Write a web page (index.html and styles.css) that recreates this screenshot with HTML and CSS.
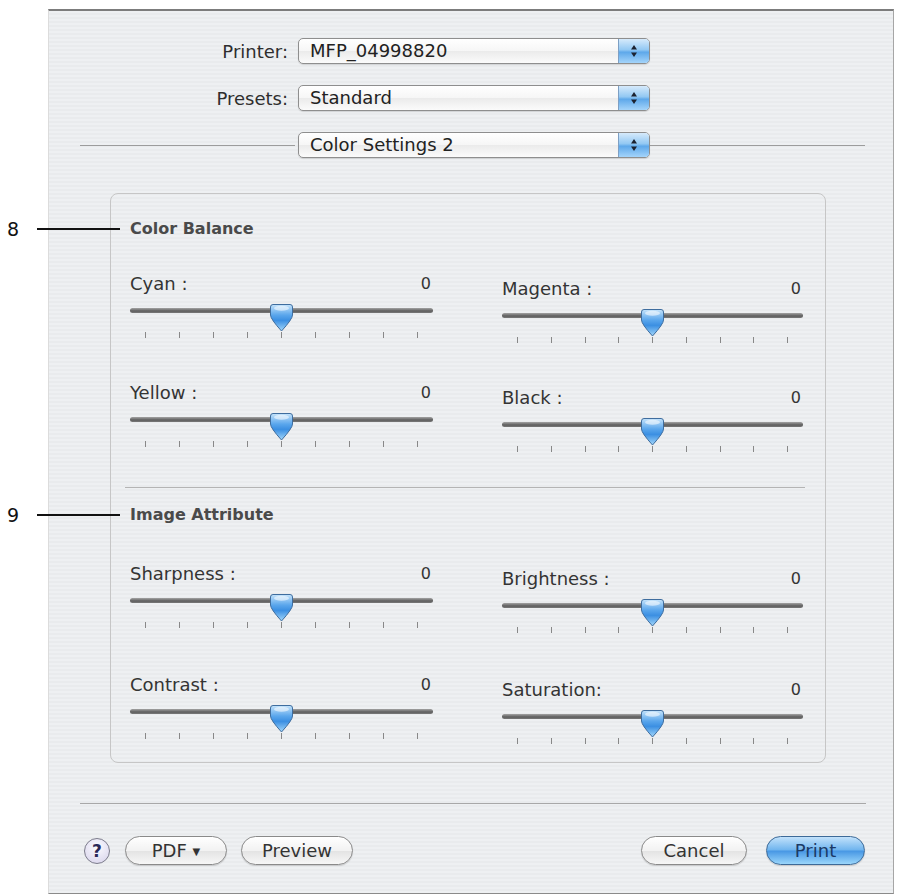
FILE: index.html
```html
<!DOCTYPE html>
<html lang="en">

<head>
    <meta charset="UTF-8">
    <meta name="viewport" content="width=device-width, initial-scale=1.0">
    <title>Print</title>
    <link rel="stylesheet" href="styles.css">
</head>

<body>
    <!-- shared shapes for the slider thumbs -->
    <svg class="defs" width="0" height="0">
        <defs>
            <linearGradient id="thumbFill" x1="0" y1="0" x2="0" y2="1">
                <stop offset="0" stop-color="#c6e4fb" />
                <stop offset="0.4" stop-color="#5aa6ec" />
                <stop offset="0.6" stop-color="#3b8fe2" />
                <stop offset="1" stop-color="#a4d8fb" />
            </linearGradient>
            <symbol id="thumb" viewBox="0 0 23 28">
                <path d="M3 0.5 H20 Q22.5 0.5 22.5 3 V11 Q22.5 15 11.5 27 Q0.5 15 0.5 11 V3 Q0.5 0.5 3 0.5 Z"
                    fill="url(#thumbFill)" stroke="#3f6d9e" stroke-width="1" />
                <ellipse cx="11.5" cy="4.2" rx="7.5" ry="2.5" fill="#fff" opacity="0.55" />
            </symbol>
        </defs>
    </svg>

    <div class="dialog">
        <div class="field">
            <span class="field-label">Printer:</span>
            <div class="popup">
                <span class="popup-text">MFP_04998820</span>
                <span class="popup-arrows">
                    <svg width="10" height="16" viewBox="0 0 10 16"><path d="M2 6.5 L5 2 L8 6.5 Z M2 9.5 L5 14 L8 9.5 Z" fill="#1c2230" /></svg>
                </span>
            </div>
        </div>
        <div class="field">
            <span class="field-label">Presets:</span>
            <div class="popup">
                <span class="popup-text">Standard</span>
                <span class="popup-arrows">
                    <svg width="10" height="16" viewBox="0 0 10 16"><path d="M2 6.5 L5 2 L8 6.5 Z M2 9.5 L5 14 L8 9.5 Z" fill="#1c2230" /></svg>
                </span>
            </div>
        </div>
        <div class="panel-select">
            <span class="rule rule-left"></span>
            <div class="popup">
                <span class="popup-text">Color Settings 2</span>
                <span class="popup-arrows">
                    <svg width="10" height="16" viewBox="0 0 10 16"><path d="M2 6.5 L5 2 L8 6.5 Z M2 9.5 L5 14 L8 9.5 Z" fill="#1c2230" /></svg>
                </span>
            </div>
            <span class="rule"></span>
        </div>

        <div class="group">
            <h3 class="section-title"><span class="callout">8<span class="callout-line"></span></span>Color Balance</h3>
            <div class="sliders">
                <div class="slider">
                    <div class="slider-head"><span>Cyan :</span><span class="slider-value">0</span></div>
                    <div class="track"><svg class="thumb" width="23" height="28"><use href="#thumb" /></svg></div>
                    <div class="ticks"><i></i><i></i><i></i><i></i><i></i><i></i><i></i><i></i><i></i></div>
                </div>
                <div class="slider shift">
                    <div class="slider-head"><span>Magenta :</span><span class="slider-value">0</span></div>
                    <div class="track"><svg class="thumb" width="23" height="28"><use href="#thumb" /></svg></div>
                    <div class="ticks"><i></i><i></i><i></i><i></i><i></i><i></i><i></i><i></i><i></i></div>
                </div>
                <div class="slider">
                    <div class="slider-head"><span>Yellow :</span><span class="slider-value">0</span></div>
                    <div class="track"><svg class="thumb" width="23" height="28"><use href="#thumb" /></svg></div>
                    <div class="ticks"><i></i><i></i><i></i><i></i><i></i><i></i><i></i><i></i><i></i></div>
                </div>
                <div class="slider shift">
                    <div class="slider-head"><span>Black :</span><span class="slider-value">0</span></div>
                    <div class="track"><svg class="thumb" width="23" height="28"><use href="#thumb" /></svg></div>
                    <div class="ticks"><i></i><i></i><i></i><i></i><i></i><i></i><i></i><i></i><i></i></div>
                </div>
            </div>

            <div class="group-rule"></div>

            <h3 class="section-title title-image"><span class="callout">9<span class="callout-line"></span></span>Image Attribute</h3>
            <div class="sliders sliders-image">
                <div class="slider">
                    <div class="slider-head"><span>Sharpness :</span><span class="slider-value">0</span></div>
                    <div class="track"><svg class="thumb" width="23" height="28"><use href="#thumb" /></svg></div>
                    <div class="ticks"><i></i><i></i><i></i><i></i><i></i><i></i><i></i><i></i><i></i></div>
                </div>
                <div class="slider shift">
                    <div class="slider-head"><span>Brightness :</span><span class="slider-value">0</span></div>
                    <div class="track"><svg class="thumb" width="23" height="28"><use href="#thumb" /></svg></div>
                    <div class="ticks"><i></i><i></i><i></i><i></i><i></i><i></i><i></i><i></i><i></i></div>
                </div>
                <div class="slider">
                    <div class="slider-head"><span>Contrast :</span><span class="slider-value">0</span></div>
                    <div class="track"><svg class="thumb" width="23" height="28"><use href="#thumb" /></svg></div>
                    <div class="ticks"><i></i><i></i><i></i><i></i><i></i><i></i><i></i><i></i><i></i></div>
                </div>
                <div class="slider shift">
                    <div class="slider-head"><span>Saturation:</span><span class="slider-value">0</span></div>
                    <div class="track"><svg class="thumb" width="23" height="28"><use href="#thumb" /></svg></div>
                    <div class="ticks"><i></i><i></i><i></i><i></i><i></i><i></i><i></i><i></i><i></i></div>
                </div>
            </div>
        </div>

        <div class="footer-rule"></div>

        <div class="buttons">
            <span class="help">?</span>
            <button class="btn btn-pdf">PDF <span class="caret">&#9660;</span></button>
            <button class="btn btn-preview">Preview</button>
            <span class="spacer"></span>
            <button class="btn btn-cancel">Cancel</button>
            <button class="btn btn-print">Print</button>
        </div>
    </div>
</body>

</html>
```

FILE: styles.css
```css
* {
    margin: 0;
    padding: 0;
    box-sizing: border-box;
}

body {
    background: #fff;
    font-family: "DejaVu Sans", sans-serif;
    color: #333;
}

.defs {
    position: absolute;
}

.dialog {
    width: 846px;
    height: 885px;
    margin: 9px 0 0 48px;
    padding-top: 27px;
    border-top: 2px solid #7c7c7c;
    border-left: 1px solid #dcdcdc;
    border-right: 1px solid #a6a6a6;
    border-bottom: 1px solid #8a8a8a;
    background: repeating-linear-gradient(#eef0f2 0 2px, #e9ebed 2px 4px);
}

/* printer / presets rows */
.field {
    display: flex;
    align-items: center;
    height: 26px;
    margin-bottom: 21px;
}

.field-label {
    width: 239px;
    margin-right: 10px;
    text-align: right;
    font-size: 18px;
    color: #2e2e2e;
}

.popup {
    display: flex;
    width: 352px;
    height: 26px;
    border: 1px solid #8e8e8e;
    border-radius: 5px;
    overflow: hidden;
    background: linear-gradient(#ffffff, #f6f6f6 50%, #ebebeb 52%, #fbfbfb);
    box-shadow: 0 1px 1px rgba(0, 0, 0, 0.12);
}

.popup-text {
    flex: 1;
    padding-left: 11px;
    font-size: 18px;
    line-height: 24px;
    color: #222;
}

.popup-arrows {
    display: flex;
    align-items: center;
    justify-content: center;
    width: 31px;
    border-left: 1px solid #7d9fc4;
    background: linear-gradient(#d6eafb, #92c8f3 45%, #5ea8ea 55%, #a4d4fa);
}

.panel-select {
    display: flex;
    align-items: center;
    height: 26px;
    margin-left: 31px;
}

.rule {
    width: 215px;
    height: 1px;
    background: #9c9c9c;
}

.rule-left {
    margin-right: 3px;
}

/* settings box */
.group {
    width: 716px;
    height: 570px;
    margin: 35px 0 0 61px;
    padding: 25px 22px 0 19px;
    border: 1px solid #c6c6c6;
    border-radius: 8px;
}

.section-title {
    position: relative;
    font-size: 16px;
    font-weight: bold;
    line-height: 20px;
    color: #4a4a4a;
}

.callout {
    position: absolute;
    top: 0;
    right: calc(100% + 10px);
    display: flex;
    align-items: center;
    height: 20px;
    font-size: 19px;
    font-weight: normal;
    color: #111;
}

.callout-line {
    width: 83px;
    height: 2px;
    margin-left: 18px;
    background: #111;
}

.sliders {
    display: grid;
    grid-template-columns: 303px 301px;
    column-gap: 69px;
    row-gap: 37px;
    margin-top: 32px;
}

.sliders-image {
    row-gap: 39px;
    margin-top: 36px;
}

.slider.shift {
    margin-top: 5px;
}

.slider-head {
    display: flex;
    justify-content: space-between;
    align-items: center;
    height: 24px;
    font-size: 18px;
    color: #343434;
}

.slider-value {
    padding-right: 2px;
    font-size: 16px;
}

.track {
    display: flex;
    justify-content: center;
    align-items: center;
    height: 5px;
    margin-top: 13px;
    border-radius: 3px;
    background: linear-gradient(#a4a4a4, #5e5e5e 60%, #7a7a7a);
}

.thumb {
    flex: none;
    margin-top: 14px;
}

.ticks {
    display: flex;
    justify-content: space-between;
    height: 6px;
    margin-top: 19px;
    padding: 0 15px;
}

.ticks i {
    width: 1px;
    background: #888;
}

.group-rule {
    height: 1px;
    margin: 35px -2px 0 -5px;
    background: #b4b4b4;
}

.title-image {
    margin-top: 17px;
}

/* bottom buttons */
.footer-rule {
    height: 1px;
    margin: 40px 27px 0 31px;
    background: #a8a8a8;
}

.buttons {
    display: flex;
    align-items: center;
    height: 29px;
    margin-top: 32px;
    padding: 0 28px 0 35px;
}

.help {
    display: flex;
    align-items: center;
    justify-content: center;
    width: 26px;
    height: 26px;
    margin-right: 15px;
    border: 1px solid #7c7c8c;
    border-radius: 50%;
    background: radial-gradient(circle at 50% 35%, #fbfbff, #d6d1ea);
    font-size: 17px;
    font-weight: bold;
    color: #2a2858;
}

.btn {
    height: 29px;
    border: 1px solid #8a8a8a;
    border-radius: 15px;
    background: linear-gradient(#ffffff, #f2f2f2 50%, #e3e3e3 52%, #f7f7f7);
    box-shadow: 0 1px 1px rgba(0, 0, 0, 0.15);
    font-family: "DejaVu Sans", sans-serif;
    font-size: 18px;
    color: #333;
}

.btn-pdf {
    width: 102px;
}

.caret {
    font-size: 10px;
    vertical-align: 2px;
}

.btn-preview {
    width: 112px;
    margin-left: 14px;
}

.spacer {
    flex: 1;
}

.btn-cancel {
    width: 106px;
}

.btn-print {
    width: 99px;
    margin-left: 19px;
    border-color: #3d6a98;
    background: linear-gradient(#c2e2fb, #6fb4ee 48%, #4797e4 52%, #9ad6fb);
    color: #1b3a66;
}
```
